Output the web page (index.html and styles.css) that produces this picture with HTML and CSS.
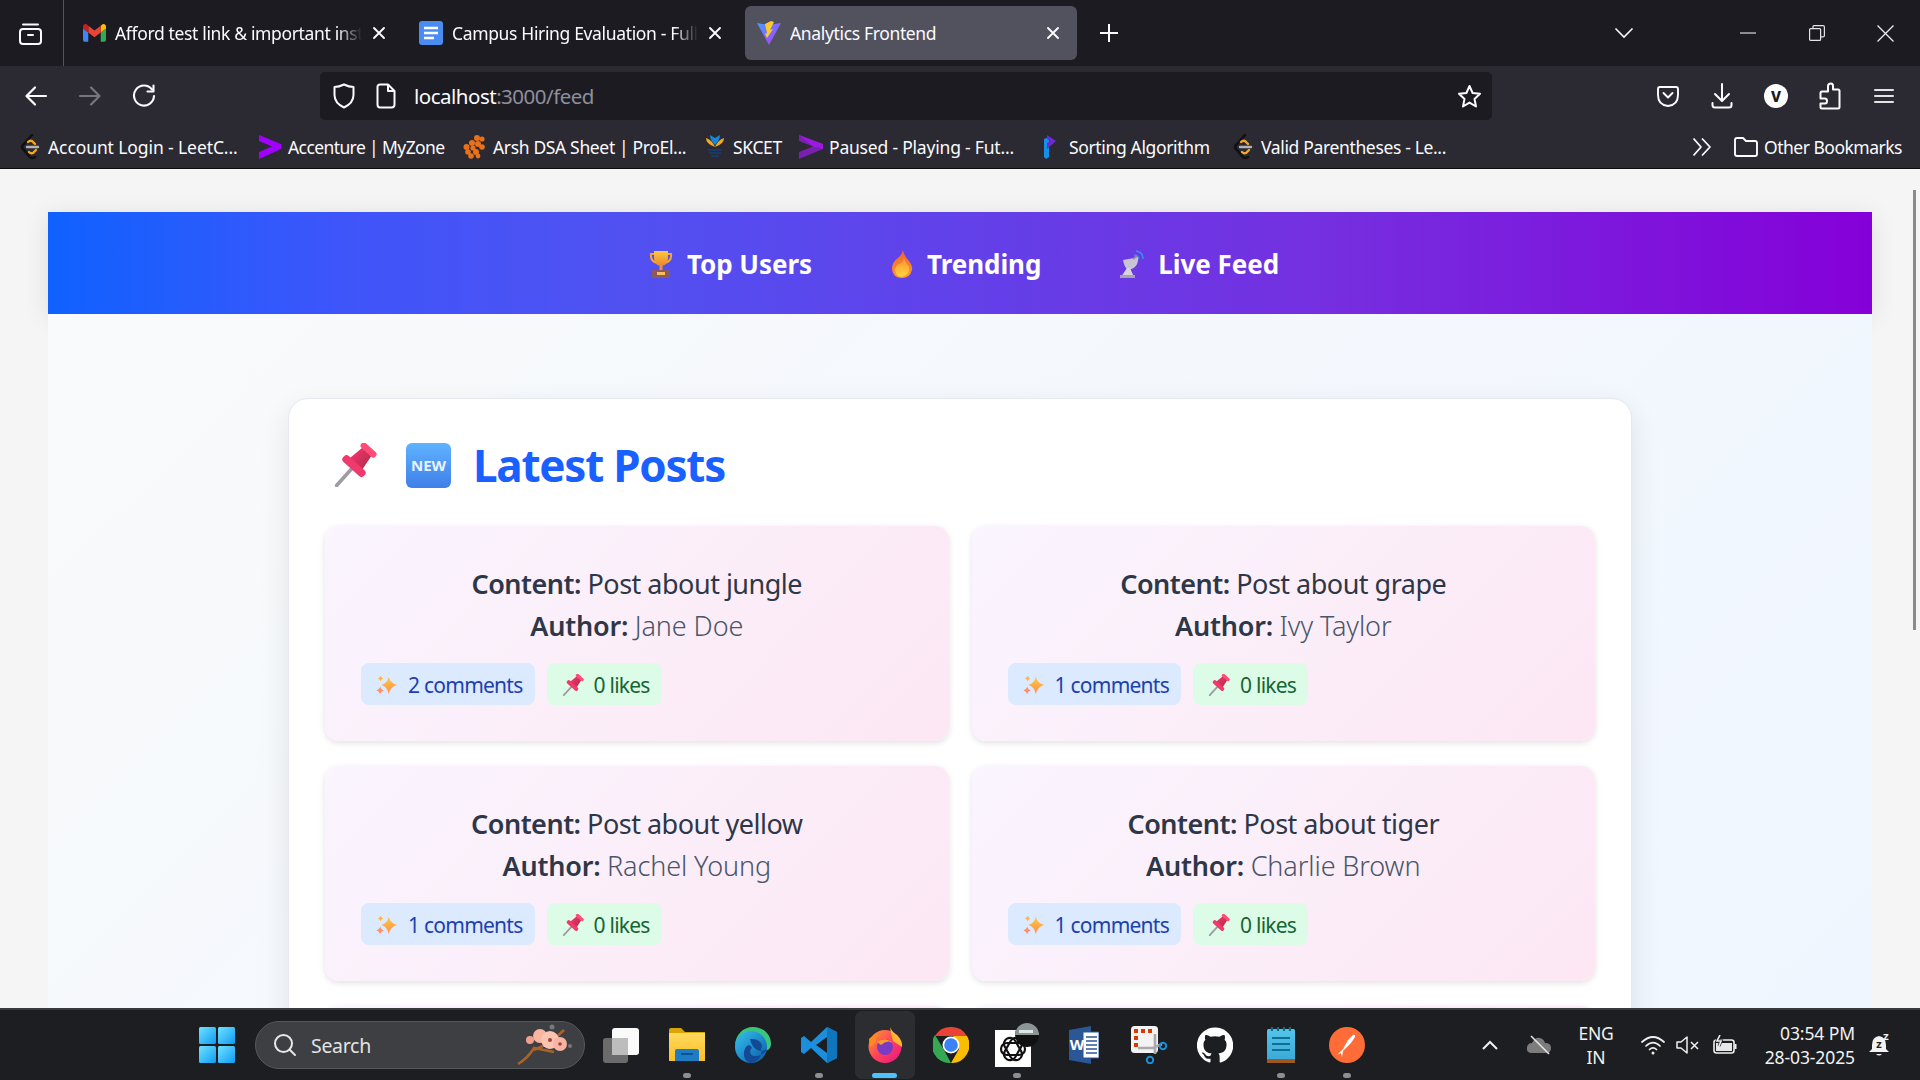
FILE: index.html
```html
<!DOCTYPE html>
<html lang="en">
<head>
<meta charset="utf-8">
<title>Analytics Frontend</title>
<link rel="stylesheet" href="styles.css">
</head>
<body>
<svg class="defs" width="0" height="0" aria-hidden="true">
  <defs>
    <linearGradient id="pinB" x1="0" y1="0" x2="1" y2="0"><stop offset="0" stop-color="#f0306a"/><stop offset="1" stop-color="#b9304f"/></linearGradient>
    <linearGradient id="spG" x1="0" y1="0" x2="0" y2="1"><stop offset="0" stop-color="#ffc83d"/><stop offset="1" stop-color="#ff8f4f"/></linearGradient>
    <linearGradient id="newG" x1="0" y1="0" x2="0" y2="1"><stop offset="0" stop-color="#5fb3ff"/><stop offset="1" stop-color="#3f7fe8"/></linearGradient>
    <linearGradient id="tropG" x1="0" y1="0" x2="0" y2="1"><stop offset="0" stop-color="#ffc83d"/><stop offset="1" stop-color="#e8862e"/></linearGradient>
    <linearGradient id="fireG" x1="0" y1="0" x2="0" y2="1"><stop offset="0" stop-color="#f0622f"/><stop offset="1" stop-color="#ff9a2e"/></linearGradient>
    <linearGradient id="fireI" x1="0" y1="0" x2="0" y2="1"><stop offset="0" stop-color="#ff9030"/><stop offset="1" stop-color="#ffd63d"/></linearGradient>
    <linearGradient id="viteG" x1="0" y1="0" x2="1" y2="1"><stop offset="0" stop-color="#41a0ff"/><stop offset="1" stop-color="#bd34fe"/></linearGradient>
    <linearGradient id="winG" x1="0" y1="0" x2="1" y2="1"><stop offset="0" stop-color="#6fe3ff"/><stop offset="1" stop-color="#0f9bf5"/></linearGradient>
    <linearGradient id="folderG" x1="0" y1="0" x2="0" y2="1"><stop offset="0" stop-color="#ffd95e"/><stop offset="1" stop-color="#fbbf24"/></linearGradient>
    <linearGradient id="edgeG" x1="0" y1="0" x2="1" y2="1"><stop offset="0" stop-color="#35c1f1"/><stop offset="1" stop-color="#0c59a4"/></linearGradient>
    <linearGradient id="ffG" x1="0" y1="0" x2="1" y2="1"><stop offset="0" stop-color="#ff9a2e"/><stop offset=".55" stop-color="#ff3d5e"/><stop offset="1" stop-color="#e31587"/></linearGradient>
    <linearGradient id="noteG" x1="0" y1="0" x2="0" y2="1"><stop offset="0" stop-color="#56c4ea"/><stop offset="1" stop-color="#36a8d8"/></linearGradient>
    <symbol id="pin" viewBox="0 0 44 44">
      <g transform="rotate(42 22 22)">
        <path d="M22 27 V49.500" stroke="#a09aa4" stroke-width="3.600" stroke-linecap="round"/>
        <path d="M16 4 H28 L30.500 21 H13.500 Z" fill="url(#pinB)"/>
        <rect x="8" y="19.500" width="28" height="8" rx="3.500" fill="#f03a6e"/>
        <rect x="12.500" y="-1.500" width="19" height="6.500" rx="3" fill="#ff4d76"/>
      </g>
    </symbol>
    <symbol id="sparkle" viewBox="0 0 24 24">
      <path d="M14 3 Q15.500 10 23 12 Q15.500 14 14 22 Q12.500 14 6 12 Q12.500 10 14 3 Z" fill="url(#spG)"/>
      <path d="M5 2 Q5.600 4.500 8 5 Q5.600 5.500 5 8 Q4.400 5.500 2 5 Q4.400 4.500 5 2 Z" fill="#ffb347"/>
      <path d="M4.500 14 Q5.200 17 8.500 18 Q5.200 19 4.500 22 Q3.800 19 .5 18 Q3.800 17 4.500 14 Z" fill="#ff8f6b"/>
    </symbol>
    <symbol id="lc" viewBox="0 0 20 26">
      <path d="M12 1 L3 11 Q1 13 3 15 L10 23 Q12 25 15 23" fill="none" stroke="#111" stroke-width="2.600" stroke-linecap="round"/>
      <path d="M8 8 Q10 6 12 7 L15 10" fill="none" stroke="#f5a623" stroke-width="2.400" stroke-linecap="round"/>
      <path d="M7 13 H18" stroke="#b4b4b4" stroke-width="2.400" stroke-linecap="round"/>
      <path d="M9 18 Q11 20 13 19 L16 16" fill="none" stroke="#f5a623" stroke-width="2.400" stroke-linecap="round"/>
    </symbol>
    <symbol id="close" viewBox="0 0 16 16"><path d="M3 3 L13 13 M13 3 L3 13" stroke="#fbfbfe" stroke-width="1.900" stroke-linecap="round"/></symbol>
  </defs>
</svg>

<div class="desktop">
  <header class="chrome">
    <div class="tabstrip">
      <div class="sidebar-btn">
        <svg width="25" height="25" viewBox="0 0 25 25" fill="none" stroke="#fbfbfe" stroke-width="2"><rect x="2" y="8" width="21" height="15" rx="3"/><path d="M5 3.500 H20" stroke-linecap="round"/><path d="M10 14 H15" stroke-linecap="round"/></svg>
      </div>
      <div class="tab">
        <svg class="fav" width="23" height="18" viewBox="0 0 24 18"><path fill="#4285f4" d="M1.600 18H5.500V8.500L0 4.400V16.400C0 17.300.7 18 1.600 18z"/><path fill="#34a853" d="M18.500 18h3.900c.9 0 1.600-.7 1.600-1.600V4.400l-5.500 4.100z"/><path fill="#fbbc04" d="M18.500 1.400v7.100L24 4.400V2.200C24 .2 21.700-1 20.100.2z"/><path fill="#ea4335" d="M5.500 8.500V1.400L12 6.300l6.500-4.900v7.100L12 13.400z"/><path fill="#c5221f" d="M0 2.200v2.200l5.500 4.100V1.400L3.900.2C2.300-1 0 .2 0 2.200z"/></svg>
        <span class="tab-title fade">Afford test link &amp; important inst</span>
        <svg class="tab-x" width="16" height="16"><use href="#close"/></svg>
      </div>
      <div class="tab">
        <svg class="fav" width="24" height="24" viewBox="0 0 24 24"><rect width="24" height="24" rx="3" fill="#4a8cf0"/><path d="M5 7 H19 M5 12 H19 M5 17 H15" stroke="#fff" stroke-width="2.600"/></svg>
        <span class="tab-title fade">Campus Hiring Evaluation - Full</span>
        <svg class="tab-x" width="16" height="16"><use href="#close"/></svg>
      </div>
      <div class="tab active">
        <svg class="fav" width="24" height="24" viewBox="0 0 24 24"><path d="M0 2 L12 4 L24 2 L12 24 Z" fill="url(#viteG)"/><path d="M14 0 L8 3 L10 12 L8 13 L10 17 L16 8 L13 9 L17 1 Z" fill="#ffc928"/></svg>
        <span class="tab-title">Analytics Frontend</span>
        <svg class="tab-x" width="16" height="16"><use href="#close"/></svg>
      </div>
      <div class="new-tab">
        <svg width="20" height="20" viewBox="0 0 20 20"><path d="M10 1 V19 M1 10 H19" stroke="#fbfbfe" stroke-width="2"/></svg>
      </div>
      <div class="strip-space"></div>
      <div class="tab-list">
        <svg width="20" height="12" viewBox="0 0 20 12" fill="none"><path d="M1.500 1.500 L10 10 L18.500 1.500" stroke="#fbfbfe" stroke-width="1.600"/></svg>
      </div>
      <div class="win-btn"><svg width="16" height="16" viewBox="0 0 16 16"><path d="M0 8 H16" stroke="#d8d8dc" stroke-width="1.200"/></svg></div>
      <div class="win-btn"><svg width="16" height="16" viewBox="0 0 16 16" fill="none" stroke="#e4e4e8" stroke-width="1.200"><rect x=".6" y="3.600" width="11" height="11.800" rx="1"/><path d="M4 3.500 V1.600 Q4 .6 5 .6 H14 Q15.400 .6 15.400 2 V10.500 Q15.400 11.800 14 11.800 H12"/></svg></div>
      <div class="win-btn"><svg width="17" height="17" viewBox="0 0 17 17"><path d="M.5 .5 L16.500 16.500 M16.500 .5 L.5 16.500" stroke="#ececf0" stroke-width="1.300"/></svg></div>
    </div>

    <div class="navbar">
      <div class="nav-btns">
        <div class="nav-btn"><svg width="24" height="24" viewBox="0 0 24 24" fill="none" stroke="#fbfbfe" stroke-width="2.200" stroke-linecap="round" stroke-linejoin="round"><path d="M3 12 H22 M11 3.500 L2.500 12 L11 20.500"/></svg></div>
        <div class="nav-btn"><svg width="24" height="24" viewBox="0 0 24 24" fill="none" stroke="#75757c" stroke-width="2.200" stroke-linecap="round" stroke-linejoin="round"><path d="M2 12 H21 M13 3.500 L21.500 12 L13 20.500"/></svg></div>
        <div class="nav-btn"><svg width="24" height="24" viewBox="0 0 24 24" fill="none" stroke="#fbfbfe" stroke-width="2.100" stroke-linecap="round" stroke-linejoin="round"><path d="M20 5.500 A10 10 0 1 0 22 12"/><path d="M21.500 1.500 V7.500 H15.500" /></svg></div>
      </div>
      <div class="urlbar">
        <svg class="url-shield" width="22" height="26" viewBox="0 0 22 26" fill="none" stroke="#fbfbfe" stroke-width="2"><path d="M11 1.500 Q16 4 20.500 4 V12 Q20.500 20 11 24.500 Q1.500 20 1.500 12 V4 Q6 4 11 1.500 Z" stroke-linejoin="round"/></svg>
        <svg class="url-page" width="20" height="26" viewBox="0 0 20 26" fill="none" stroke="#fbfbfe" stroke-width="2" stroke-linejoin="round"><path d="M4 1.500 H12 L18.500 8 V21.500 Q18.500 24.500 15.500 24.500 H4 Q1.500 24.500 1.500 21.500 V4 Q1.500 1.500 4 1.500 Z"/><path d="M12 1.500 V8 H18.500"/></svg>
        <span class="url-text">localhost<span class="url-dim">:3000/feed</span></span>
        <svg class="url-star" width="25" height="25" viewBox="0 0 25 25" fill="none" stroke="#fbfbfe" stroke-width="2" stroke-linejoin="round"><path d="M12.500 2 L15.600 9 L23 9.800 L17.500 14.900 L19 22.500 L12.500 18.600 L6 22.500 L7.500 14.900 L2 9.800 L9.400 9 Z"/></svg>
      </div>
      <div class="tool-btns">
        <div class="tool-btn"><svg width="22" height="22" viewBox="0 0 22 22" fill="none" stroke="#fbfbfe" stroke-width="1.900" stroke-linecap="round" stroke-linejoin="round"><path d="M3 2 H19 Q21 2 21 4 V10 Q21 20 11 21 Q1 20 1 10 V4 Q1 2 3 2 Z"/><path d="M6.500 8 L11 12.500 L15.500 8"/></svg></div>
        <div class="tool-btn"><svg width="22" height="26" viewBox="0 0 22 26" fill="none" stroke="#fbfbfe" stroke-width="2" stroke-linecap="round" stroke-linejoin="round"><path d="M11 1 V17 M4 11 L11 18 L18 11"/><path d="M1.500 20 V22 Q1.500 24.500 4 24.500 H18 Q20.500 24.500 20.500 22 V20"/></svg></div>
        <div class="tool-btn"><span class="avatar">V</span></div>
        <div class="tool-btn"><svg width="22" height="28" viewBox="0 0 22 28" fill="none" stroke="#fbfbfe" stroke-width="2" stroke-linejoin="round"><path d="M9 4 Q9 1.500 12 1.500 Q14 1.500 14 4 V7.500 H19 Q20.500 7.500 20.500 9 V25 Q20.500 26.500 19 26.500 H3 Q1.500 26.500 1.500 25 V21.500 H6 Q8 21.500 8 19 Q8 16.500 6 16.500 H1.500 V11 Q1.500 9.500 3 9.500 H9 Z"/></svg></div>
        <div class="tool-btn"><svg width="20" height="16" viewBox="0 0 20 16"><path d="M1 2 H19 M1 8 H19 M1 14 H19" stroke="#e4e4e8" stroke-width="2" stroke-linecap="round"/></svg></div>
      </div>
    </div>

    <div class="bookmarks">
      <div class="bm bm-lc1"><svg class="bm-ico" width="20" height="26"><use href="#lc"/></svg><span>Account Login - LeetC...</span></div>
      <div class="bm bm-acc"><svg class="bm-ico" width="22" height="24" viewBox="0 0 22 24"><path d="M0 0 L22 9 V14 L0 24 V17 L13 11.500 L0 6 Z" fill="#a100ff"/></svg><span>Accenture | MyZone</span></div>
      <div class="bm bm-arsh"><svg class="bm-ico" width="22" height="24" viewBox="0 0 22 24" fill="#e8711a"><circle cx="14" cy="3" r="3"/><circle cx="19" cy="4" r="2.600"/><circle cx="9" cy="8" r="3"/><circle cx="15" cy="9" r="3"/><circle cx="3.500" cy="12" r="3"/><circle cx="10" cy="13" r="2.600"/><circle cx="19" cy="12" r="2.800"/><circle cx="5" cy="17" r="2.800"/><circle cx="13" cy="17" r="3"/><circle cx="8" cy="21" r="2.800"/><circle cx="15" cy="21" r="2.400"/></svg><span>Arsh DSA Sheet | ProEl...</span></div>
      <div class="bm bm-sk"><svg class="bm-ico" width="20" height="26" viewBox="0 0 20 26"><path d="M10 13 Q1 10 1 4 Q7 6 10 13 Z" fill="#f5a623"/><path d="M10 13 Q19 10 19 4 Q13 6 10 13 Z" fill="#f5a623"/><path d="M10 11 Q5 6 5 1 L10 4 L15 1 Q15 6 10 11 Z" fill="#1787d8"/><path d="M3 16 H17 M4 19 H16 M6 22 H14" stroke="#1a3c78" stroke-width="1.500"/></svg><span>SKCET</span></div>
      <div class="bm bm-pause"><svg class="bm-ico" width="24" height="24" viewBox="0 0 24 24"><path d="M0 0 L24 9 V14 L0 24 V17 L14 11.500 L0 6 Z" fill="#7a1fb0"/><path d="M0 0 L24 9 V14 L14 11.500 Z" fill="#9a1ae0"/></svg><span>Paused - Playing - Fut...</span></div>
      <div class="bm bm-sort"><svg class="bm-ico" width="14" height="24" viewBox="0 0 14 24"><path d="M0 4 L5 2 V22 L2 24 L0 22 Z" fill="#168fe8"/><path d="M3 0 L12 6 L3 14 V8 L6 6 L3 4 Z" fill="#6d28d9"/></svg><span>Sorting Algorithm</span></div>
      <div class="bm bm-lc2"><svg class="bm-ico" width="20" height="26"><use href="#lc"/></svg><span>Valid Parentheses - Le...</span></div>
      <div class="bm-space"></div>
      <svg class="bm-more" width="20" height="20" viewBox="0 0 20 20" fill="none" stroke="#fbfbfe" stroke-width="1.800" stroke-linejoin="round"><path d="M1.500 1.500 L9 10 L1.500 18.500 M10 1.500 L18 10 L10 18.500"/></svg>
      <div class="bm bm-other"><svg class="bm-ico" width="24" height="20" viewBox="0 0 24 20" fill="none" stroke="#fbfbfe" stroke-width="1.900" stroke-linejoin="round"><path d="M3 1 H9 L12 4 H21 Q23 4 23 6 V17 Q23 19 21 19 H3 Q1 19 1 17 V3 Q1 1 3 1 Z"/></svg><span>Other Bookmarks</span></div>
    </div>
  </header>

  <div class="viewport">
    <div class="app">
      <nav class="topnav">
        <a class="topnav-item"><svg width="24" height="28" viewBox="0 0 24 28" fill="none"><path d="M6 4 H2 Q1 11 8 13 M18 4 H22 Q23 11 16 13" stroke="#f3a531" stroke-width="2"/><path d="M5 1 H19 V8 Q19 15 12 16 Q5 15 5 8 Z" fill="url(#tropG)"/><rect x="10.500" y="15" width="3" height="6" fill="#e9952f"/><rect x="3" y="20" width="18" height="8" rx="1" fill="#8a5a5e"/><rect x="8" y="22" width="8" height="3" fill="#f6bd5a"/></svg><span>Top Users</span></a>
        <a class="topnav-item"><svg width="22" height="28" viewBox="0 0 22 28"><path d="M12 0 Q13 6 18 11 Q22 16 21 20 Q19 28 11 28 Q2 28 1 19 Q1 12 7 8 Q11 5 12 0 Z" fill="url(#fireG)"/><path d="M13 8 Q15 14 18 17 Q20 24 11 27 Q4 26 4 19 Q6 14 10 13 Q12 11 13 8 Z" fill="url(#fireI)"/></svg><span>Trending</span></a>
        <a class="topnav-item"><svg width="24" height="28" viewBox="0 0 24 28" fill="none"><path d="M14 5 Q18 5 19 9 M16 1 Q23 2 23 9" stroke="#3f8cf0" stroke-width="1.500"/><path d="M3 10 Q15 8 18 7 Q19 18 8 20 Q4 17 3 10 Z" fill="#c9c3d6"/><path d="M13 9 L17 6" stroke="#8d8a9e" stroke-width="1.600"/><path d="M7 18 L1 27 H14 L10 18 Z" fill="#d8d4de"/><rect y="25" width="15" height="3" fill="#a8a3b4"/></svg><span>Live Feed</span></a>
      </nav>
      <main class="content">
        <section class="panel">
          <h1 class="panel-title">
            <svg class="title-pin" width="44" height="44"><use href="#pin"/></svg>
            <svg class="title-new" width="45" height="45" viewBox="0 0 45 45"><rect width="45" height="45" rx="6" fill="url(#newG)"/><text x="22.500" y="28" text-anchor="middle" class="new-text">NEW</text></svg>
            <span>Latest Posts</span>
          </h1>
          <div class="post-grid">
            <article class="post">
              <p class="post-line"><b>Content:</b> Post about jungle</p>
              <p class="post-line post-by"><b>Author:</b> <span class="author">Jane Doe</span></p>
              <div class="pills">
                <span class="pill pill-blue"><svg width="22" height="22"><use href="#sparkle"/></svg>2 comments</span>
                <span class="pill pill-green"><svg width="22" height="22"><use href="#pin"/></svg>0 likes</span>
              </div>
            </article>
            <article class="post">
              <p class="post-line"><b>Content:</b> Post about grape</p>
              <p class="post-line post-by"><b>Author:</b> <span class="author">Ivy Taylor</span></p>
              <div class="pills">
                <span class="pill pill-blue"><svg width="22" height="22"><use href="#sparkle"/></svg>1 comments</span>
                <span class="pill pill-green"><svg width="22" height="22"><use href="#pin"/></svg>0 likes</span>
              </div>
            </article>
            <article class="post">
              <p class="post-line"><b>Content:</b> Post about yellow</p>
              <p class="post-line post-by"><b>Author:</b> <span class="author">Rachel Young</span></p>
              <div class="pills">
                <span class="pill pill-blue"><svg width="22" height="22"><use href="#sparkle"/></svg>1 comments</span>
                <span class="pill pill-green"><svg width="22" height="22"><use href="#pin"/></svg>0 likes</span>
              </div>
            </article>
            <article class="post">
              <p class="post-line"><b>Content:</b> Post about tiger</p>
              <p class="post-line post-by"><b>Author:</b> <span class="author">Charlie Brown</span></p>
              <div class="pills">
                <span class="pill pill-blue"><svg width="22" height="22"><use href="#sparkle"/></svg>1 comments</span>
                <span class="pill pill-green"><svg width="22" height="22"><use href="#pin"/></svg>0 likes</span>
              </div>
            </article>
            <article class="post post-peek"></article>
            <article class="post post-peek"></article>
          </div>
        </section>
      </main>
    </div>
    <div class="scroll-thumb"></div>
  </div>

  <footer class="taskbar">
    <div class="task-slot">
      <svg width="36" height="36" viewBox="0 0 36 36"><rect width="17" height="17" rx="1.500" fill="url(#winG)"/><rect x="19" width="17" height="17" rx="1.500" fill="url(#winG)"/><rect y="19" width="17" height="17" rx="1.500" fill="url(#winG)"/><rect x="19" y="19" width="17" height="17" rx="1.500" fill="url(#winG)"/></svg>
    </div>
    <div class="search">
      <svg width="24" height="24" viewBox="0 0 24 24" fill="none" stroke="#e8e8e8" stroke-width="2" stroke-linecap="round"><circle cx="10.500" cy="10.500" r="8.500"/><path d="M16.500 16.500 L22 22"/></svg>
      <span class="search-text">Search</span>
      <svg class="search-art" width="66" height="42" viewBox="0 0 66 42"><path d="M8 40 Q18 34 24 24 Q34 26 44 28 M24 26 Q40 20 54 6" fill="none" stroke="#a8632c" stroke-width="2.500"/><circle cx="30" cy="12" r="7" fill="#f8b6a0"/><circle cx="40" cy="16" r="9" fill="#fbc4b0"/><circle cx="50" cy="20" r="7" fill="#f7b3a3"/><circle cx="20" cy="16" r="4" fill="#f2a08e"/><circle cx="40" cy="16" r="2" fill="#a53d3d"/><circle cx="50" cy="20" r="1.800" fill="#a53d3d"/><circle cx="60" cy="22" r="2" fill="#77777c"/><circle cx="42" cy="3" r="2.500" fill="#77777c"/></svg>
    </div>
    <div class="task-apps">
      <div class="task-slot"><svg width="36" height="36" viewBox="0 0 36 36"><rect x="0" y="11" width="25" height="25" rx="3" fill="#6b6b6b"/><rect x="9" y="1" width="27" height="27" rx="3" fill="#fafafa"/><rect x="9" y="11" width="16" height="17" fill="#bdbdbd"/></svg></div>
      <div class="task-slot running"><svg width="36" height="36" viewBox="0 0 36 36"><path d="M0 3 Q0 1 2 1 H12 L16 5 H36 V33 H0 Z" fill="#d9a406"/><rect y="6" width="36" height="28" fill="url(#folderG)"/><path d="M6 34 V24 Q6 22 8 22 H28 Q30 22 30 24 V34 Z" fill="#1d7cc4"/><rect x="12" y="26" width="12" height="1.800" fill="#0b4f8a"/></svg></div>
      <div class="task-slot"><svg width="36" height="36" viewBox="0 0 36 36"><path d="M18 0 C29 0 36 8 36 17 C36 24 29 25 26 22 C29 13 22 7 15 8 C7 9 1 14 0 19 C0 8 8 0 18 0 Z" fill="#39c480"/><circle cx="16" cy="20" r="16" fill="url(#edgeG)"/><path d="M15 12 C24 11 29 17 26 22 C28 28 23 36 15 36 C9 34 7 26 11 20 C13 17 16 18 17 21 C14 23 15 29 20 29 C26 29 30 26 32 22 C26 26 18 24 15 12 Z" fill="#124a96"/></svg></div>
      <div class="task-slot running"><svg width="36" height="36" viewBox="0 0 36 36"><path d="M26 0 L36 5 V31 L26 36 L10 21 L3 27 L0 25 V11 L3 9 L10 15 Z M26 10 L15 18 L26 26 Z" fill="#1b8fdd" fill-rule="evenodd"/><path d="M26 0 L36 5 V31 L26 36 Z M26 10 L26 26" fill="#0f75bd"/></svg></div>
      <div class="task-slot active-app"><svg width="36" height="36" viewBox="0 0 36 36"><circle cx="18" cy="19.500" r="16.500" fill="url(#ffG)"/><path d="M23 0 Q25 5 30 8 Q36 14 35 20 L26 14 Q24 7 23 0 Z" fill="#ffb62e"/><path d="M2 12 Q8 6 12 9 Q8 11 9 15 L3 20 Z" fill="#ff8a1f"/><circle cx="18" cy="20" r="8" fill="#7a3bc4"/><path d="M10 15 Q18 9 26 16 Q20 12 14 18 Z" fill="#ff9a2e"/></svg></div>
      <div class="task-slot"><svg width="36" height="36" viewBox="0 0 36 36"><path d="M18 0 A18 18 0 0 1 34 9 H18 Z M2 9 A18 18 0 0 1 18 0 V9 Z" fill="#ea4335"/><path d="M2 8 L11 23 L18 36 A18 18 0 0 1 2 8 Z" fill="#34a853"/><path d="M34 9 A18 18 0 0 1 18 36 L26 22 L20 9 Z" fill="#fbbc04"/><circle cx="18" cy="18" r="8.500" fill="#fff"/><circle cx="18" cy="18" r="6.800" fill="#3b82f6"/></svg></div>
      <div class="task-slot running chat"><svg width="44" height="44" viewBox="0 0 44 44"><rect x="0" y="7" width="36" height="37" fill="#fff"/><g fill="none" stroke="#111" stroke-width="2.200"><rect x="6" y="20" width="24" height="12" rx="6"/><rect x="6" y="20" width="24" height="12" rx="6" transform="rotate(60 18 26)"/><rect x="6" y="20" width="24" height="12" rx="6" transform="rotate(120 18 26)"/></g><circle cx="32" cy="12" r="12" fill="#111"/><path d="M20 12 A12 12 0 0 1 44 12 Z" fill="#8b9694"/><rect x="24" y="7" width="14" height="3" fill="#dfe6e4"/></svg></div>
      <div class="task-slot"><svg width="32" height="38" viewBox="0 0 32 38"><path d="M2 4 L24 0 V38 L2 34 Z" fill="#2b5797"/><rect x="16" y="6" width="16" height="26" fill="#fff" stroke="#2b5797"/><path d="M19 11 H30 M19 15 H30 M19 19 H30 M19 23 H30 M19 27 H30" stroke="#2b5797" stroke-width="1.500"/><text x="10" y="24" text-anchor="middle" class="word-w">W</text></svg></div>
      <div class="task-slot"><svg width="36" height="38" viewBox="0 0 36 38"><rect width="27" height="27" rx="3.500" fill="#f3f3f3"/><path d="M3 3 H7 V7 H3 Z M10 3 H14 V7 H10 Z M17 3 H21 V7 H17 Z M3 10 H7 V14 H3 Z M3 17 H7 V21 H3 Z" fill="#d83b01"/><path d="M7 22 H22 L31 18 M24 8 V28" fill="none" stroke="#a9a9ae" stroke-width="2.600"/><circle cx="32" cy="20" r="3.200" fill="none" stroke="#1b8fdd" stroke-width="2"/><circle cx="19" cy="34" r="3.200" fill="none" stroke="#1b8fdd" stroke-width="2"/></svg></div>
      <div class="task-slot"><svg width="36" height="36" viewBox="0 0 24 24"><path fill="#fff" d="M12 .3a12 12 0 0 0-3.800 23.400c.6.1.8-.3.8-.6v-2c-3.300.7-4-1.600-4-1.600-.6-1.400-1.400-1.800-1.400-1.800-1-.7.1-.7.1-.7 1.200.1 1.800 1.200 1.800 1.200 1 1.800 2.800 1.300 3.500 1 .1-.8.4-1.300.8-1.600-2.700-.3-5.500-1.300-5.500-6 0-1.200.5-2.300 1.300-3.100-.2-.4-.6-1.600 0-3.200 0 0 1-.3 3.400 1.200a11.500 11.500 0 0 1 6 0c2.300-1.500 3.300-1.200 3.300-1.200.7 1.600.2 2.800.1 3.200.8.8 1.300 1.900 1.300 3.100 0 4.600-2.800 5.700-5.500 6 .5.4.9 1 .9 2.200v3.300c0 .3.2.7.8.6A12 12 0 0 0 12 .3"/></svg></div>
      <div class="task-slot running"><svg width="28" height="36" viewBox="0 0 28 36"><rect y="2" width="28" height="34" rx="1.500" fill="url(#noteG)"/><rect y="32" width="28" height="4" rx="1" fill="#a0561d"/><path d="M5 0 V4 M11 0 V4 M17 0 V4 M23 0 V4" stroke="#0f6d8e" stroke-width="2.200"/><path d="M5 11 H23 M5 17 H23 M5 23 H23" stroke="#0e6f93" stroke-width="2"/></svg></div>
      <div class="task-slot running"><svg width="36" height="36" viewBox="0 0 36 36"><circle cx="18" cy="18" r="18" fill="#ff6c37"/><path d="M8 28 L14 22 L19 13 L24 8 Q27 7 26 10 L22 16 L14 24 L13 30 L12 26 Z" fill="#fff"/></svg></div>
    </div>
    <div class="tray">
      <svg class="tray-up" width="16" height="10" viewBox="0 0 16 10" fill="none"><path d="M1 9 L8 2 L15 9" stroke="#f0f0f0" stroke-width="2"/></svg>
      <svg class="tray-cloud" width="26" height="20" viewBox="0 0 26 20"><path d="M6 18 Q0 18 1 12 Q2 8 6 8 Q9 2 14 3 Q18 4 19 8 Q25 8 25 13 Q25 18 20 18 Z" fill="#7c7c7c"/><path d="M5 1 L23 19" stroke="#e6e6e6" stroke-width="1.600"/></svg>
      <div class="tray-lang"><span>ENG</span><span>IN</span></div>
      <svg class="tray-wifi" width="24" height="20" viewBox="0 0 24 20" fill="none" stroke="#f0f0f0" stroke-width="1.700" stroke-linecap="round"><path d="M1 7 Q12 -3 23 7 M5 11 Q12 4 19 11 M8.500 14.500 Q12 11 15.500 14.500"/><circle cx="12" cy="18" r="1.500" fill="#f0f0f0" stroke="none"/></svg>
      <svg class="tray-sound" width="24" height="20" viewBox="0 0 24 20" fill="none" stroke="#f0f0f0" stroke-width="1.500"><path d="M1 7 H5 L11 2 V18 L5 13 H1 Z" stroke-linejoin="round"/><path d="M15 7 L22 14 M22 7 L15 14"/></svg>
      <svg class="tray-batt" width="24" height="20" viewBox="0 0 24 20" fill="none" stroke="#f0f0f0" stroke-width="1.600"><rect x="1" y="5" width="20" height="13" rx="2.500"/><rect x="3" y="8" width="16" height="8" fill="#e8e8e8" stroke="none"/><rect x="21.500" y="9" width="2" height="5" fill="#f0f0f0" stroke="none"/><path d="M7 0 L4 6 H8 L6 11" stroke="#1c1e21" stroke-width="3"/><path d="M7 0 L4 6 H8 L6 11"/></svg>
      <div class="tray-clock"><span>03:54 PM</span><span>28-03-2025</span></div>
      <svg class="tray-bell" width="24" height="36" viewBox="0 -6 24 36"><path d="M10 3 Q3 4 3 12 V16 L0 19 H20 L17 16 V12 Q17 4 10 3 Z" fill="#f2f2f2"/><path d="M7 21 Q10 24 13 21 Z" fill="#f2f2f2"/><text x="10" y="15" text-anchor="middle" class="bell-z">Z</text><text x="17" y="7" text-anchor="middle" class="bell-z2">Z</text></svg>
    </div>
  </footer>
</div>
</body>
</html>
```

FILE: styles.css
```css
* { box-sizing: border-box; }
html, body { margin: 0; padding: 0; height: 100%; overflow: hidden; }
body { font-family: "Noto Sans", "Open Sans", sans-serif; background: #f5f5f5; }
.defs { display: block; width: 0; height: 0; overflow: hidden; }
p, h1 { margin: 0; }
svg { display: block; flex: none; }

.desktop { display: flex; flex-direction: column; height: 1080px; width: 1920px; }

/* browser chrome */
.chrome { flex: none; height: 169px; background: #2b2a33; color: #fbfbfe; border-bottom: 1px solid #0b0b0e; }
.tabstrip { display: flex; align-items: center; height: 66px; background: #1c1b22; }
.sidebar-btn { width: 64px; height: 66px; display: flex; align-items: center; padding-left: 18px; border-right: 1px solid #54545c; flex: none; }
.tab { flex: none; width: 332px; height: 54px; margin-left: 9px; margin-right: -5px; padding: 0 18px 0 10px; display: flex; align-items: center; gap: 9px; border-radius: 6px; font-size: 17.500px; letter-spacing: -.35px; }
.tab.active { background: #52525e; margin-left: 9px; margin-right: 0; padding: 0 16px 0 12px; }
.tab-title { flex: 1; white-space: nowrap; overflow: hidden; }
.fade { -webkit-mask-image: linear-gradient(90deg, #000 90%, transparent 100%); mask-image: linear-gradient(90deg, #000 90%, transparent 100%); }
.new-tab { width: 64px; flex: none; display: flex; justify-content: center; }
.strip-space { flex: 1; }
.tab-list { width: 99px; flex: none; display: flex; justify-content: flex-start; }
.win-btn { width: 69px; height: 66px; flex: none; display: flex; align-items: center; justify-content: center; }

.navbar { height: 54px; display: flex; align-items: center; padding-top: 6px; }
.nav-btns { display: flex; width: 320px; padding-left: 9px; flex: none; }
.nav-btn { width: 54px; display: flex; justify-content: center; }
.urlbar { width: 1172px; height: 48px; flex: none; display: flex; align-items: center; background: #1c1b22; border-radius: 5px; padding: 0 10px 0 13px; }
.url-page { margin-left: 21px; }
.url-text { margin-left: 18px; font-size: 20.500px; letter-spacing: -.5px; flex: 1; color: #fbfbfe; }
.url-dim { color: #8f8f9d; }
.tool-btns { flex: 1; display: flex; justify-content: flex-end; padding-right: 9px; }
.tool-btn { width: 54px; display: flex; justify-content: center; align-items: center; }
.avatar { width: 24px; height: 24px; border-radius: 50%; background: #fff; color: #1c1b22; font-size: 15px; font-weight: 800; line-height: 24px; text-align: center; }

.bookmarks { height: 48px; display: flex; align-items: center; padding: 6px 0 0 20px; font-size: 17.500px; letter-spacing: -.35px; }
.bm { display: flex; align-items: center; gap: 8px; flex: none; white-space: nowrap; }
.bm-lc1 { width: 239px; letter-spacing: -.1px; }
.bm-acc { width: 204px; letter-spacing: -.6px; gap: 7px; }
.bm-arsh { width: 242px; }
.bm-sk { width: 94px; }
.bm-pause { width: 245px; gap: 6px; letter-spacing: -.2px; }
.bm-sort { width: 189px; gap: 11px; }
.bm-lc2 { width: 220px; }
.bm-space { flex: 1; }
.bm-more { margin-right: 22px; }
.bm-other { width: 186px; gap: 6px; letter-spacing: -.5px; }

/* page */
.viewport { flex: 1; min-height: 0; position: relative; overflow: hidden; padding: 43px 48px 0; background: #f5f5f5; }
.app { height: 100%; }
.scroll-thumb { position: absolute; top: 21px; left: 1913px; width: 3px; height: 440px; background: #8a8a8a; }

.topnav { height: 102px; display: flex; justify-content: center; align-items: center; gap: 79px; padding: 2px 0 0 8px; background: linear-gradient(90deg, #0f62ff 0%, #3e55fa 16%, #4f52f2 30%, #752fe0 70%, #8500d8 100%); box-shadow: 0 4px 24px rgba(0,0,0,.1); }
.topnav-item { display: flex; align-items: center; gap: 14px; color: #fff; font-size: 26px; font-weight: 700; letter-spacing: -.05px; white-space: nowrap; }
.content { position: relative; height: calc(100% - 102px); padding: 84px 240px 0; overflow: hidden; background: linear-gradient(135deg, #f9fafb, #eff6ff); }
.panel { background: #fff; border: 1px solid #e7e7f0; border-radius: 20px; padding: 36px 36px 0; box-shadow: 0 10px 30px rgba(0,0,0,.09); min-height: 700px; }
.panel-title { display: flex; align-items: center; height: 60px; margin-bottom: 31px; color: #1a5fff; font-size: 44px; font-weight: 700; letter-spacing: -1.250px; line-height: 60px; padding-left: 8px; }
.title-new { margin-left: 29px; margin-right: 22px; }
.new-text { font-family: "Noto Sans", sans-serif; font-size: 15px; font-weight: 700; fill: #e8f3ff; letter-spacing: 0; }

.post-grid { display: grid; grid-template-columns: 1fr 1fr; gap: 25px 23px; }
.post { height: 215px; padding: 37px 36px 0; border-radius: 14px; background: linear-gradient(135deg, #faf5ff, #fce7f3); box-shadow: 0 2px 6px rgba(0,0,0,.12); color: #2d3748; }
.post-line { font-size: 27px; line-height: 42px; text-align: center; letter-spacing: -.5px; white-space: nowrap; }
.post-line b { font-weight: 600; }
.post-by b { letter-spacing: -.2px; }
.author { font-weight: 300; color: #4a5568; letter-spacing: -.1px; }
.pills { display: flex; gap: 12px; margin-top: 16px; }
.pill { height: 42px; display: flex; align-items: center; gap: 10px; padding: 2px 12px 0 15px; border-radius: 8px; font-size: 21px; letter-spacing: -.75px; white-space: nowrap; }
.pill-blue { background: #dbeafe; color: #1e40af; }
.pill-green { background: #dcfce7; color: #166534; }

/* taskbar */
.taskbar { flex: none; height: 72px; display: flex; align-items: center; padding-left: 184px; background: #1c1e21; border-top: 2px solid #3a3a3d; color: #f2f2f2; }
.task-slot { width: 66px; height: 68px; display: flex; align-items: center; justify-content: center; position: relative; flex: none; }
.task-slot.running::after { content: ""; position: absolute; left: 29px; bottom: 1px; width: 8px; height: 5px; border-radius: 3px; background: #8e8e8e; }
.task-slot.active-app { background: #2c2d31; border-radius: 7px; width: 60px; margin: 0 3px; }
.task-slot.active-app::after { content: ""; position: absolute; left: 17px; bottom: 1px; width: 25px; height: 5px; border-radius: 3px; background: #4cc2ff; }
.search { width: 330px; height: 48px; margin-left: 5px; margin-right: 3px; flex: none; display: flex; align-items: center; padding: 0 8px 0 17px; border-radius: 24px; background: #3e3f42; border: 1px solid #56575a; }
.search-text { flex: 1; margin-left: 14px; font-size: 19.500px; letter-spacing: -.3px; color: #e4e4e4; }
.task-apps { display: flex; }
.tray { position: absolute; right: 0; bottom: 0; height: 70px; width: 480px; display: flex; align-items: center; }
.tray-up { margin-left: 42px; }
.tray-cloud { margin-left: 28px; }
.tray-lang { width: 60px; margin-left: 14px; display: flex; flex-direction: column; align-items: center; font-size: 17.500px; line-height: 24px; letter-spacing: -.2px; }
.tray-wifi { margin-left: 15px; }
.tray-sound { margin-left: 11px; }
.tray-batt { margin-left: 13px; }
.tray-clock { width: 118px; display: flex; flex-direction: column; align-items: flex-end; font-size: 17.500px; line-height: 24px; letter-spacing: -.1px; }
.tray-bell { margin-left: 14px; }
.word-w { font-family: "Noto Sans", sans-serif; font-size: 15px; font-weight: 700; fill: #fff; }
.bell-z { font-family: "Noto Sans", sans-serif; font-size: 9px; font-weight: 800; fill: #1c1e21; }
.bell-z2 { font-family: "Noto Sans", sans-serif; font-size: 9px; font-weight: 800; fill: #f2f2f2; }
```
